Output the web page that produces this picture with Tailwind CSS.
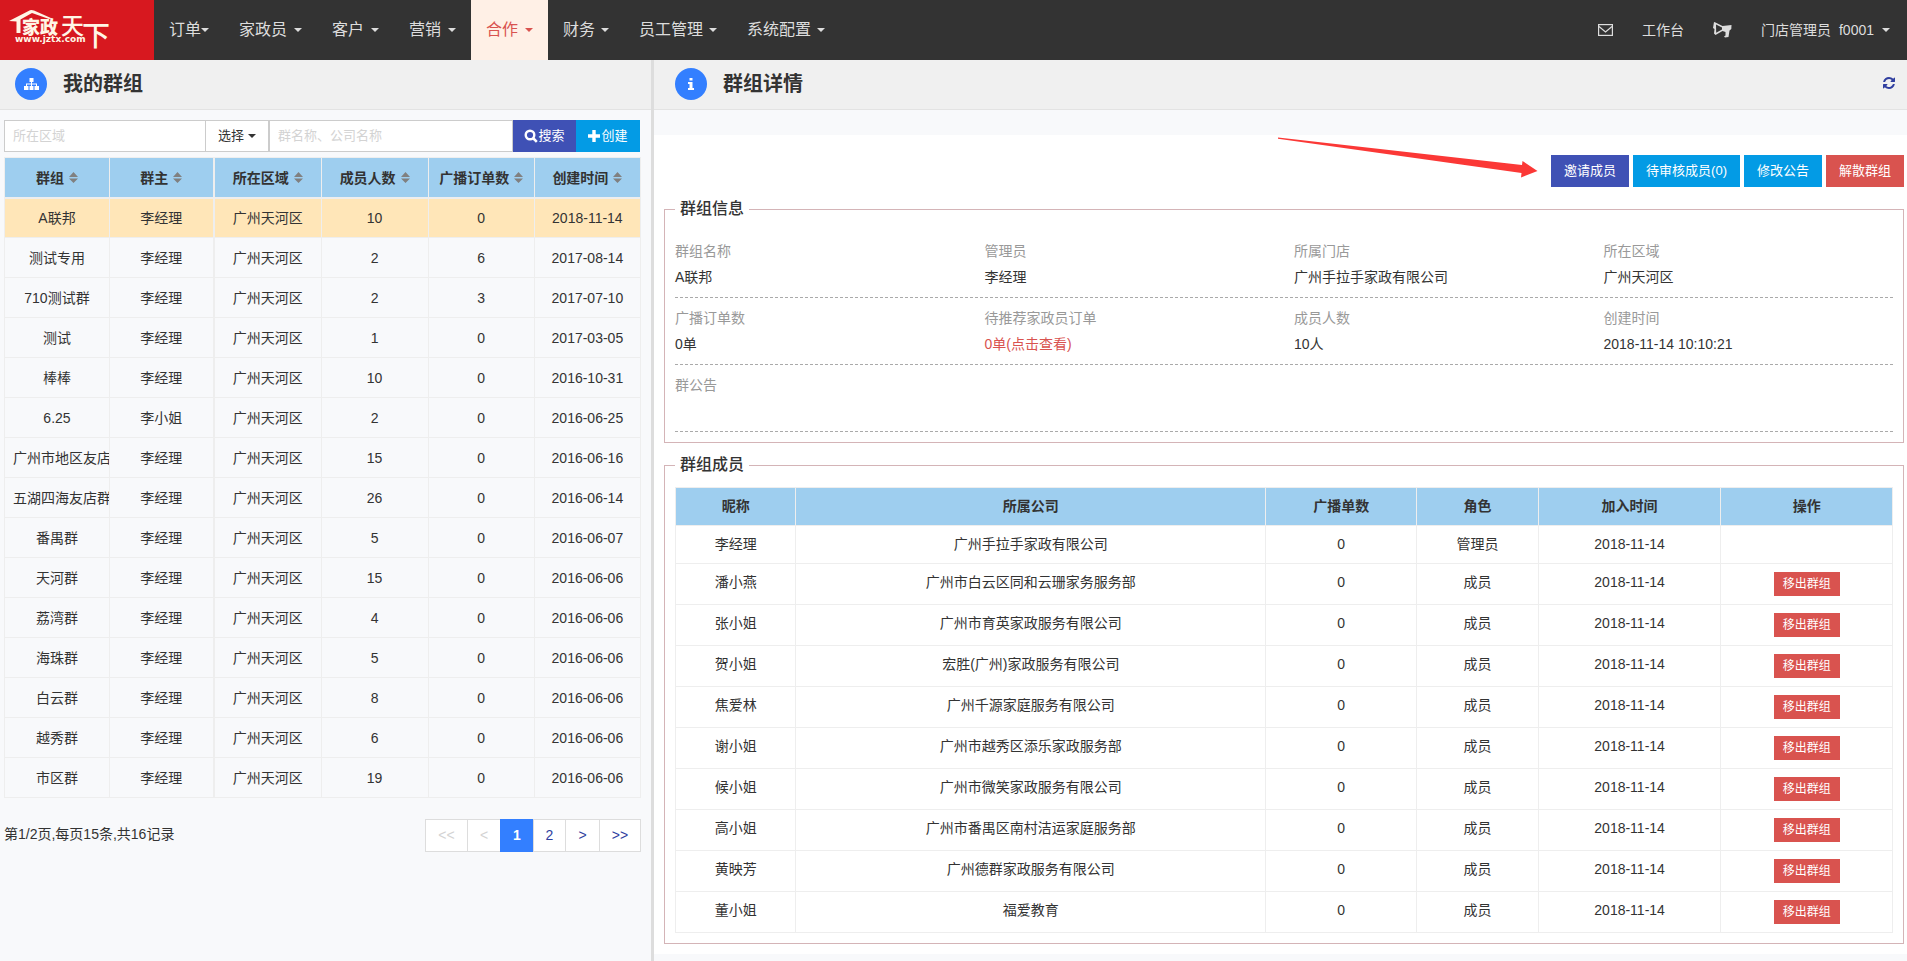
<!DOCTYPE html>
<html lang="zh-CN">
<head>
<meta charset="utf-8">
<meta name="viewport" content="width=device-width, initial-scale=1">
<title>我的群组</title>
<script src="https://cdn.jsdelivr.net/npm/@tailwindcss/browser@4"></script>
</head>
<body class="min-h-screen flex flex-col bg-[#f8f9fb] font-['Liberation_Sans','Noto_Sans_CJK_SC',sans-serif] text-sm text-[#333]">

<header class="flex h-15 shrink-0 bg-[#333] text-[#ddd]">
  <a href="#" aria-label="家政天下" class="w-[154px] shrink-0 bg-[#d7181f]">
    <svg class="block" width="154" height="60" viewBox="0 0 154 60" fill="#fff6e6">
      <path d="M9 21 L30 10.2 Q32 9.6 34 10.6 L52 18.6 L49 19 L32 13 L20.5 19.5 L20.5 33 L16.5 33 L16.5 21.5 Z"/>
      <text x="22" y="34" font-size="18" font-weight="900" font-family="Noto Sans CJK SC, sans-serif">家政</text>
      <text x="61" y="34" font-size="23" font-weight="500" font-family="Noto Sans CJK SC, sans-serif">天</text>
      <text x="82" y="46" font-size="28" font-weight="500" font-family="Noto Sans CJK SC, sans-serif">下</text>
      <text x="15" y="42" font-size="9" font-weight="700" font-family="DejaVu Sans, sans-serif">www.jztx.com</text>
    </svg>
  </a>
  <nav id="nav" class="flex text-base" aria-label="主导航"></nav>
  <div class="ml-auto flex items-center pr-[17px]">
    <a href="#" aria-label="消息" class="mr-[29px]">
      <svg width="15" height="12" viewBox="0 0 15 12" fill="none" stroke="#ddd" stroke-width="1.2"><rect x=".6" y=".6" width="13.8" height="10.8"/><path d="M1 2.5 L7.5 8 L14 2.5"/></svg>
    </a>
    <a href="#" class="mr-[29px]">工作台</a>
    <a href="#" aria-label="公告" class="mr-[29px]">
      <svg width="19" height="16" viewBox="0 0 19 16" fill="#ddd"><path d="M1 0 L2.500 .5 L9.500 4 L18.500 3 L18.300 7 L16.500 8.500 L15.500 15 L12 15.500 L11 14.500 L12.500 13.500 L12.500 10 L9.500 9 L2.500 13 L1 11.500 L1.500 7 L0 6 Z"/><path fill="#333" d="M3 2.600 L9 5.600 L9 7.400 L3.200 10.800 Z"/></svg>
    </a>
    <a href="#" class="flex items-center gap-2"><span>门店管理员</span><span>f0001</span><i class="border-x-4 border-t-4 border-x-transparent border-t-[#ddd]"></i></a>
  </div>
</header>

<main class="grid grow grid-cols-[651fr_1256fr]">
  <section class="min-w-0">
    <div class="flex h-[50px] items-center gap-4 border-b border-[#e3e3e3] bg-[#f0f0f0] pb-px pl-[15px]">
      <span class="flex size-8 items-center justify-center rounded-full bg-[#337fff]">
        <svg width="15" height="12" viewBox="0 0 15 12" fill="#fff"><path d="M5.500 0h4v4H8v1.500h5V8h2v4h-4.500V8h1.500V6.500H8V8h1.500v4h-4V8H7V6.500H3V8h1.500v4H0V8h2V5.500h5V4H5.500z"/></svg>
      </span>
      <h1 class="text-xl font-semibold">我的群组</h1>
    </div>

    <div class="pl-1 pr-2.5 pt-2.5">
      <form class="mr-px flex h-8 text-[13px]" onsubmit="return false">
        <input type="text" aria-label="所在区域" placeholder="所在区域" class="w-[202px] min-w-0 border border-[#ccc] bg-white px-2 placeholder:text-[#d3d3d3]">
        <button type="button" class="-ml-px flex w-16 shrink-0 items-center justify-center gap-1 border border-[#ccc] bg-white">选择<i class="border-x-4 border-t-4 border-x-transparent border-t-[#333]"></i></button>
        <input type="text" aria-label="群名称、公司名称" placeholder="群名称、公司名称" class="min-w-0 grow border border-[#ccc] bg-white px-2 placeholder:text-[#d3d3d3]">
        <button type="submit" class="flex w-[63px] shrink-0 items-center justify-center bg-[#3f51b5] text-white">
          <svg width="14" height="14" viewBox="0 0 14 14" fill="none" stroke="#fff"><circle cx="6" cy="6" r="4.3" stroke-width="2.4"/><path d="M9 9 L12.8 12.8" stroke-width="2.6"/></svg>搜索</button>
        <button type="button" class="flex w-16 shrink-0 items-center justify-center gap-px bg-[#039be5] text-white">
          <svg width="12" height="12" viewBox="0 0 12 12" fill="#fff"><path d="M4.3 0h3.4v4.3H12v3.4H7.7V12H4.3V7.7H0V4.3h4.3z"/></svg>创建</button>
      </form>

      <table class="mt-[5px] w-full table-fixed border-collapse text-center">
        <colgroup><col class="w-[16.5%]"><col class="w-[16.4%]"><col class="w-[16.9%]"><col class="w-[16.8%]"><col class="w-[16.7%]"><col class="w-[16.7%]"></colgroup>
        <thead><tr id="group-head" class="h-10 bg-[#9eceef]"></tr></thead>
        <tbody id="groups"></tbody>
      </table>

      <div class="mt-[21px] flex justify-between">
        <p class="leading-[31px]">第1/2页,每页15条,共16记录</p>
        <nav aria-label="分页" class="flex h-[33px] text-center leading-[31px] text-[#303f9f]">
          <a href="#" class="w-[43px] border border-[#ddd] bg-white text-[#d3d3d3]">&lt;&lt;</a>
          <a href="#" class="-ml-px w-[34px] border border-[#ddd] bg-white text-[#d3d3d3]">&lt;</a>
          <a href="#" aria-current="page" class="-ml-px w-[34px] border border-[#337fff] bg-[#337fff] font-bold text-white">1</a>
          <a href="#" class="-ml-px w-[33px] border border-[#ddd] bg-white">2</a>
          <a href="#" class="-ml-px w-[35px] border border-[#ddd] bg-white">&gt;</a>
          <a href="#" class="-ml-px w-[42px] border border-[#ddd] bg-white">&gt;&gt;</a>
        </nav>
      </div>
    </div>
  </section>

  <section class="min-w-0 border-l-3 border-[#ddd]">
    <div class="flex h-[50px] items-center gap-4 border-b border-[#e3e3e3] bg-[#f0f0f0] pb-px pl-[21px] pr-3">
      <span class="flex size-8 items-center justify-center rounded-full bg-[#337fff]">
        <svg width="6" height="12" viewBox="0 0 6 12" fill="#fff"><path d="M1.5 0h3v2.6h-3zM0 4h4.5v6H6v2H0v-2h1.5V6H0z"/></svg>
      </span>
      <h2 class="text-xl font-semibold">群组详情</h2>
      <button type="button" aria-label="刷新" class="ml-auto pb-0.5">
        <svg class="block" width="12" height="12" viewBox="0 0 1536 1536" fill="#303f9f"><path d="M1511 928q0 5-1 7-64 268-268 434.500T764 1536q-146 0-282.500-55T238 1324l-129 129q-19 19-45 19t-45-19-19-45V960q0-26 19-45t45-19h448q26 0 45 19t19 45-19 45l-137 137q71 66 161 102t187 36q134 0 250-65t186-179q11-17 53-117 8-23 30-23h192q13 0 22.500 9.500t9.500 22.500zm25-800v448q0 26-19 45t-45 19h-448q-26 0-45-19t-19-45 19-45l138-138Q969 256 768 256q-134 0-250 65T332 500q-11 17-53 117-8 23-30 23H50q-13 0-22.500-9.500T18 608v-7q65-268 270-434.500T768 0q146 0 284 55.500T1297 212l130-129q19-19 45-19t45 19 19 45z"/></svg>
      </button>
    </div>

    <div class="mt-[25px] bg-white pb-2.5 pl-2.5 pr-[3px] pt-5">
      <div class="flex justify-end">
        <div class="relative flex h-8 gap-1 text-[13px] text-white">
          <svg class="pointer-events-none absolute right-full -top-[18px] mr-[13px]" width="261" height="42" viewBox="0 0 261 42" fill="#fb3836" aria-hidden="true"><path d="M1 0.500 L245 28 L245.500 24 L260.500 34 L244 40.500 L244.500 36 L1 1.800 Z"/></svg>
          <button type="button" class="bg-[#3f51b5] px-[13px]">邀请成员</button>
          <button type="button" class="bg-[#039be5] px-[13px]">待审核成员(0)</button>
          <button type="button" class="bg-[#039be5] px-[13px]">修改公告</button>
          <button type="button" class="bg-[#d9534f] px-[13px]">解散群组</button>
        </div>
      </div>

      <fieldset class="mt-2.5 min-w-0 border border-[#d4b4b7] px-2.5 pb-2.5 pt-2.5">
        <legend class="px-[5px] text-base font-medium leading-6">群组信息</legend>
        <div class="border-b border-dashed border-[#aaa] py-[7px]">
          <dl class="-mx-2.5 grid grid-cols-4 leading-[26px] *:px-2.5">
            <div><dt class="text-[#999]">群组名称</dt><dd>A联邦</dd></div>
            <div><dt class="text-[#999]">管理员</dt><dd>李经理</dd></div>
            <div><dt class="text-[#999]">所属门店</dt><dd>广州手拉手家政有限公司</dd></div>
            <div><dt class="text-[#999]">所在区域</dt><dd>广州天河区</dd></div>
          </dl>
        </div>
        <div class="border-b border-dashed border-[#aaa] py-[7px]">
          <dl class="-mx-2.5 grid grid-cols-4 leading-[26px] *:px-2.5">
            <div><dt class="text-[#999]">广播订单数</dt><dd>0单</dd></div>
            <div><dt class="text-[#999]">待推荐家政员订单</dt><dd><a href="#" class="text-[#d9534f]">0单(点击查看)</a></dd></div>
            <div><dt class="text-[#999]">成员人数</dt><dd>10人</dd></div>
            <div><dt class="text-[#999]">创建时间</dt><dd>2018-11-14 10:10:21</dd></div>
          </dl>
        </div>
        <div class="border-b border-dashed border-[#aaa] py-[7px]">
          <dl class="leading-[26px]"><dt class="text-[#999]">群公告</dt><dd class="min-h-[26px]"></dd></dl>
        </div>
      </fieldset>

      <fieldset class="mt-2.5 min-w-0 border border-[#d4b4b7] px-2.5 pb-2.5 pt-2.5">
        <legend class="px-[5px] text-base font-medium leading-6">群组成员</legend>
        <table class="w-full table-fixed border-collapse text-center leading-[21px]">
          <colgroup><col class="w-[9.9%]"><col class="w-[38.6%]"><col class="w-[12.4%]"><col class="w-[10%]"><col class="w-[15%]"><col class="w-[14.1%]"></colgroup>
          <thead><tr id="member-head" class="bg-[#9eceef]"></tr></thead>
          <tbody id="members"></tbody>
        </table>
      </fieldset>
    </div>
  </section>
</main>

<script>
const nav = ['订单', '家政员', '客户', '营销', '合作', '财务', '员工管理', '系统配置'];
document.getElementById('nav').innerHTML = nav.map((t, i) => {
  const gap = i === 0 ? '' : i > 4 ? 'gap-1.5' : 'gap-[7px]';
  return t === '合作'
    ? `<a href="#" aria-current="page" class="flex items-center gap-[7px] bg-[#fff0e6] px-[15px] text-[#d9534f]">${t}<i class="border-x-4 border-t-4 border-x-transparent border-t-[#d9534f]"></i></a>`
    : `<a href="#" class="flex items-center ${gap} px-[15px]">${t}<i class="border-x-4 border-t-4 border-x-transparent border-t-[#ddd]"></i></a>`;
}).join('');

const edge = i => i === 1 ? 'border border-r-2 border-[#eee]' : 'border border-[#eee]';
document.getElementById('group-head').innerHTML = ['群组', '群主', '所在区域', '成员人数', '广播订单数', '创建时间'].map((t, i) =>
  `<th scope="col" class="${edge(i)} border-b-2 p-0 font-bold"><button type="button" class="inline-flex items-center gap-[5px] align-middle whitespace-nowrap">${t}<svg width="9" height="11" viewBox="0 0 9 11" fill="#808080"><path d="M4.500 0 L9 5 H0 Z M0 6.500 H9 L4.500 11 Z"/></svg></button></th>`).join('');

const groups = [
  ['A联邦', '李经理', 10, 0, '2018-11-14'], ['测试专用', '李经理', 2, 6, '2017-08-14'],
  ['710测试群', '李经理', 2, 3, '2017-07-10'], ['测试', '李经理', 1, 0, '2017-03-05'],
  ['棒棒', '李经理', 10, 0, '2016-10-31'], ['6.25', '李小姐', 2, 0, '2016-06-25'],
  ['广州市地区友店', '李经理', 15, 0, '2016-06-16'], ['五湖四海友店群', '李经理', 26, 0, '2016-06-14'],
  ['番禺群', '李经理', 5, 0, '2016-06-07'], ['天河群', '李经理', 15, 0, '2016-06-06'],
  ['荔湾群', '李经理', 4, 0, '2016-06-06'], ['海珠群', '李经理', 5, 0, '2016-06-06'],
  ['白云群', '李经理', 8, 0, '2016-06-06'], ['越秀群', '李经理', 6, 0, '2016-06-06'],
  ['市区群', '李经理', 19, 0, '2016-06-06'],
];
document.getElementById('groups').innerHTML = groups.map(([name, owner, ...rest], r) =>
  `<tr class="h-10 ${r === 0 ? 'bg-[#ffe6b8]' : ''}">` +
  [name, owner, '广州天河区', ...rest].map((v, i) => `<td class="${edge(i)} overflow-hidden whitespace-nowrap px-2 py-0">${v}</td>`).join('') + '</tr>').join('');

document.getElementById('member-head').innerHTML = ['昵称', '所属公司', '广播单数', '角色', '加入时间', '操作'].map(t =>
  `<th scope="col" class="border border-[#eee] p-2 font-bold">${t}</th>`).join('');
const members = [
  ['李经理', '广州手拉手家政有限公司'], ['潘小燕', '广州市白云区同和云珊家务服务部'],
  ['张小姐', '广州市育英家政服务有限公司'], ['贺小姐', '宏胜(广州)家政服务有限公司'],
  ['焦爱林', '广州千源家庭服务有限公司'], ['谢小姐', '广州市越秀区添乐家政服务部'],
  ['候小姐', '广州市微笑家政服务有限公司'], ['高小姐', '广州市番禺区南村洁运家庭服务部'],
  ['黄映芳', '广州德群家政服务有限公司'], ['董小姐', '福爱教育'],
];
document.getElementById('members').innerHTML = members.map(([name, company], r) => '<tr>' +
  [name, company, 0, r ? '成员' : '管理员', '2018-11-14',
   r ? '<button type="button" class="mx-auto block h-6 bg-[#d9534f] px-[9px] text-xs text-white">移出群组</button>' : '']
  .map(v => `<td class="border border-[#eee] p-2 align-top">${v}</td>`).join('') + '</tr>').join('');
</script>
</body>
</html>
